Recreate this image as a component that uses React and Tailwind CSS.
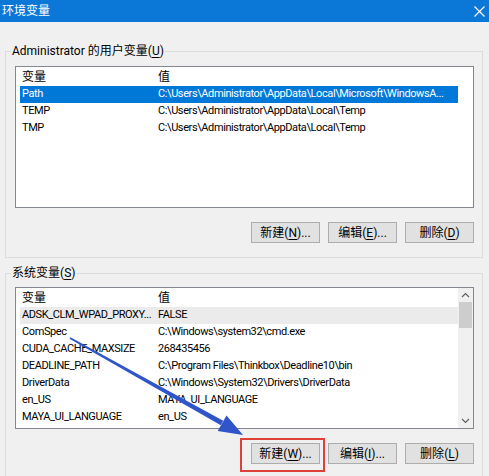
import React from 'react';

const userVars = [
    ['Path', 'C:\\Users\\Administrator\\AppData\\Local\\Microsoft\\WindowsA...'],
    ['TEMP', 'C:\\Users\\Administrator\\AppData\\Local\\Temp'],
    ['TMP', 'C:\\Users\\Administrator\\AppData\\Local\\Temp'],
];

const sysVars = [
    ['ADSK_CLM_WPAD_PROXY...', 'FALSE'],
    ['ComSpec', 'C:\\Windows\\system32\\cmd.exe'],
    ['CUDA_CACHE_MAXSIZE', '268435456'],
    ['DEADLINE_PATH', 'C:\\Program Files\\Thinkbox\\Deadline10\\bin'],
    ['DriverData', 'C:\\Windows\\System32\\Drivers\\DriverData'],
    ['en_US', 'MAYA_UI_LANGUAGE'],
    ['MAYA_UI_LANGUAGE', 'en_US'],
];

// mnemonic label like 新建(N)... with the letter underlined
const Label = ({ text, hot, tail = '' }) => (
    <span>
        {text}(<span className="underline underline-offset-2">{hot}</span>){tail}
    </span>
);

const Btn = ({ children }) => (
    <button className="w-[69px] h-[21px] bg-[#e1e1e1] border border-[#adadad] text-[12px] leading-none text-black flex items-center justify-center">
        {children}
    </button>
);

const Chevron = ({ down }) => (
    <svg width="9" height="6" viewBox="0 0 9 6" className={down ? 'rotate-180' : ''}>
        <path d="M1 5 L4.5 1.5 L8 5" fill="none" stroke="#606060" strokeWidth="1.2" />
    </svg>
);

const VarList = ({ rows, selClass, scroll }) => (
    <div className="h-[142px] w-full border border-[#828790] bg-white flex overflow-hidden">
        <div className="flex-1 min-w-0 pl-[4px] overflow-hidden">
            <div className="h-[19px] flex items-center pl-[2px] text-[12px]">
                <span className="w-[136px]">变量</span>
                <span>值</span>
            </div>
            {rows.map(([name, value], i) => (
                <div
                    key={name}
                    className={`h-[17px] flex items-center pl-[2px] whitespace-nowrap text-[11px] tracking-[-0.4px] ${i === 0 ? selClass : ''}`}
                >
                    <span className="w-[136px] shrink-0 overflow-hidden">{name}</span>
                    <span>{value}</span>
                </div>
            ))}
        </div>
        <div className="w-[15px] shrink-0 flex flex-col items-center">
            {scroll && (
                <div className="h-full w-full bg-[#f0f0f0] flex flex-col items-center">
                    <div className="h-[14px] flex items-center"><Chevron /></div>
                    <div className="w-[13px] h-[26px] bg-[#cdcdcd]" />
                    <div className="flex-1" />
                    <div className="h-[14px] flex items-center"><Chevron down /></div>
                </div>
            )}
        </div>
    </div>
);

const App = () => {
    return (
        <div
            className="relative w-[489px] h-[476px] overflow-hidden bg-[#f0f0f0] text-[12px] text-black"
            style={{ fontFamily: 'Roboto, "Noto Sans CJK SC", sans-serif' }}
        >
            {/* title bar */}
            <div className="h-[22px] bg-[#0b78d7] flex items-center justify-between pl-[2px] pr-[4px] text-white">
                <span>环境变量</span>
                <svg width="11" height="11" viewBox="0 0 11 11">
                    <path d="M0.5 0.5 L10.5 10.5 M10.5 0.5 L0.5 10.5" stroke="#fff" strokeWidth="1.2" />
                </svg>
            </div>

            <div className="pt-[21px] pl-[5px] pr-[6px]">
                <fieldset className="min-w-0 border border-[#dcdcdc] pl-[9px] pr-[8px] pt-[7px] pb-[14px] m-0">
                    <legend className="-ml-[4px] px-[1px] h-[16px] leading-[16px]">
                        Administrator 的用户变量<Label text="" hot="U" />
                    </legend>
                    <VarList rows={userVars} selClass="bg-[#0078d7] text-white" />
                    <div className="mt-[14px] flex justify-end gap-[8px]">
                        <Btn><Label text="新建" hot="N" tail="..." /></Btn>
                        <Btn><Label text="编辑" hot="E" tail="..." /></Btn>
                        <Btn><Label text="删除" hot="D" /></Btn>
                    </div>
                </fieldset>

                <fieldset className="min-w-0 mt-[7px] border border-[#dcdcdc] pl-[9px] pr-[8px] pt-[6px] pb-[14px] m-0">
                    <legend className="-ml-[4px] px-[1px] h-[16px] leading-[16px]">
                        <Label text="系统变量" hot="S" />
                    </legend>
                    <VarList rows={sysVars} selClass="bg-[#ebebeb]" scroll />
                    <div className="mt-[14px] flex justify-end gap-[8px]">
                        <div className="relative">
                            <Btn><Label text="新建" hot="W" tail="..." /></Btn>
                            <div className="absolute -left-[11px] -right-[5px] -top-[5px] -bottom-[8px] border-2 border-[#e0403a]" />
                        </div>
                        <Btn><Label text="编辑" hot="I" tail="..." /></Btn>
                        <Btn><Label text="删除" hot="L" /></Btn>
                    </div>
                </fieldset>
            </div>

            {/* pointer arrow */}
            <svg className="absolute left-0 top-0 pointer-events-none" width="489" height="476">
                <polygon points="70.5,337.2 223.2,420.8 220.8,425.2 69.5,338.8" fill="#2f55c9" />
                <polygon points="243,435 217.7,431.1 226.5,415.4" fill="#2f55c9" />
            </svg>
        </div>
    );
};

export default App;
